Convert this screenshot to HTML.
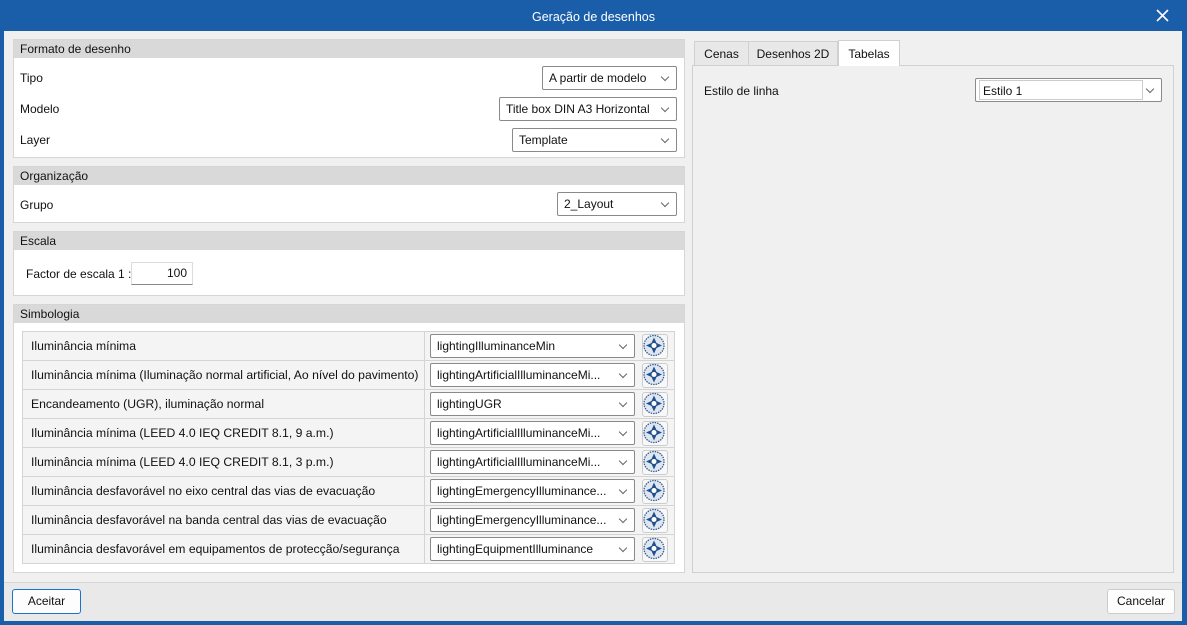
<!DOCTYPE html><html><head><style>
*{box-sizing:border-box;margin:0;padding:0}
body{width:1187px;height:625px;background:#1a5ea9;font-family:"Liberation Sans",sans-serif;font-size:12px;color:#111;position:relative;overflow:hidden}
.a{position:absolute}
.title{left:0;top:0;width:1187px;height:31px;color:#fff;text-align:center;line-height:34px;font-size:12.5px}
.x{right:17px;top:8px;width:15px;height:15px}
.main{left:4px;top:31px;width:1178px;height:590px;background:#f0f0f0}
.foot{left:4px;top:582px;width:1178px;height:39px;background:#e9e9e9;border-top:1px solid #d6d6d6}
.sec{border:1px solid #d6d6d6;background:#fff}
.sh{background:#d9d9d9;height:18px;line-height:18px;padding-left:6px}
.lbl{position:absolute;left:6px}
.sel{position:absolute;border:1px solid #8a8a8a;border-radius:2px;background:#fff;height:24px;line-height:22px;padding-left:6px;white-space:nowrap;overflow:hidden}
.sel:after{content:"";position:absolute;right:8px;top:7px;width:5px;height:5px;border-right:1px solid #666;border-bottom:1px solid #666;transform:rotate(45deg)}
.row{position:absolute;left:22px;width:653px;height:30px;border:1px solid #d4d4d4;background:#f4f4f4}
.row .t{position:absolute;left:8px;top:0;line-height:28px;font-size:12.2px}
.row .c{position:absolute;left:401px;top:-1px;width:1px;height:30px;background:#d4d4d4}
.row .sel{left:407px;top:2px;width:205px;padding-right:20px}
.btn{position:absolute;left:619px;top:2px;width:26px;height:25px;border:1px solid #ccc;border-radius:3px;background:#f8f8f8}
</style></head><body>
<div class="a title">Geração de desenhos</div>
<svg class="a x" viewBox="0 0 15 15"><path d="M2 2L13 13M13 2L2 13" stroke="#fff" stroke-width="1.6"/></svg>
<div class="a main"></div>

<div class="a sec" style="left:13px;top:39px;width:672px;height:119px"><div class="sh">Formato de desenho</div>
<span class="lbl" style="top:31px">Tipo</span><span class="lbl" style="top:62px">Modelo</span><span class="lbl" style="top:93px">Layer</span>
<div class="sel" style="left:528px;top:26px;width:135px">A partir de modelo</div>
<div class="sel" style="left:485px;top:57px;width:178px">Title box DIN A3 Horizontal</div>
<div class="sel" style="left:498px;top:88px;width:165px">Template</div></div>

<div class="a sec" style="left:13px;top:166px;width:672px;height:57px"><div class="sh">Organização</div>
<span class="lbl" style="top:31px">Grupo</span>
<div class="sel" style="left:543px;top:25px;width:120px">2_Layout</div></div>

<div class="a sec" style="left:13px;top:231px;width:672px;height:65px"><div class="sh">Escala</div>
<span class="lbl" style="left:12px;top:35px">Factor de escala 1 :</span>
<div class="a" style="left:117px;top:30px;width:62px;height:23px;border:1px solid #ddd;border-bottom:1px solid #888;text-align:right;padding-right:5px;line-height:21px">100</div></div>

<div class="a sec" style="left:13px;top:304px;width:672px;height:269px"><div class="sh">Simbologia</div></div>

<div class="row" style="top:331px"><span class="t">Iluminância mínima</span><div class="c"></div><div class="sel">lightingIlluminanceMin</div><div class="btn"></div></div>
<div class="row" style="top:360px"><span class="t">Iluminância mínima (Iluminação normal artificial, Ao nível do pavimento)</span><div class="c"></div><div class="sel">lightingArtificialIlluminanceMi...</div><div class="btn"></div></div>
<div class="row" style="top:389px"><span class="t">Encandeamento (UGR), iluminação normal</span><div class="c"></div><div class="sel">lightingUGR</div><div class="btn"></div></div>
<div class="row" style="top:418px"><span class="t">Iluminância mínima (LEED 4.0 IEQ CREDIT 8.1, 9 a.m.)</span><div class="c"></div><div class="sel">lightingArtificialIlluminanceMi...</div><div class="btn"></div></div>
<div class="row" style="top:447px"><span class="t">Iluminância mínima (LEED 4.0 IEQ CREDIT 8.1, 3 p.m.)</span><div class="c"></div><div class="sel">lightingArtificialIlluminanceMi...</div><div class="btn"></div></div>
<div class="row" style="top:476px"><span class="t">Iluminância desfavorável no eixo central das vias de evacuação</span><div class="c"></div><div class="sel">lightingEmergencyIlluminance...</div><div class="btn"></div></div>
<div class="row" style="top:505px"><span class="t">Iluminância desfavorável na banda central das vias de evacuação</span><div class="c"></div><div class="sel">lightingEmergencyIlluminance...</div><div class="btn"></div></div>
<div class="row" style="top:534px"><span class="t">Iluminância desfavorável em equipamentos de protecção/segurança</span><div class="c"></div><div class="sel">lightingEquipmentIlluminance</div><div class="btn"></div></div>

<svg class="a" style="left:0;top:0" width="1187" height="625">
<defs><g id="ic"><circle r="10" fill="#dfe6ef" stroke="#2f5d96" stroke-width="1.3" stroke-dasharray="1.5 1"/><path d="M0-8L2.5-2.5 8 0 2.5 2.5 0 8-2.5 2.5-8 0-2.5-2.5Z" fill="#1f4f8c"/><circle r="2.5" fill="#fff"/></g></defs>
<use href="#ic" x="654" y="345.5"/><use href="#ic" x="654" y="374.5"/><use href="#ic" x="654" y="403.5"/><use href="#ic" x="654" y="432.5"/><use href="#ic" x="654" y="461.5"/><use href="#ic" x="654" y="490.5"/><use href="#ic" x="654" y="519.5"/><use href="#ic" x="654" y="548.5"/>
</svg>

<div class="a" style="left:692px;top:65px;width:482px;height:508px;border:1px solid #d0d0d0;background:#f0f0f0"></div>
<div class="a" style="left:694px;top:41px;width:55px;height:25px;border:1px solid #d0d0d0;background:#e8e8e8;text-align:center;line-height:24px">Cenas</div>
<div class="a" style="left:748px;top:41px;width:90px;height:25px;border:1px solid #d0d0d0;background:#e8e8e8;text-align:center;line-height:24px">Desenhos 2D</div>
<div class="a" style="left:838px;top:40px;width:62px;height:26px;border:1px solid #d0d0d0;border-bottom:none;background:#fff;text-align:center;line-height:26px">Tabelas</div>
<span class="a" style="left:704px;top:84px">Estilo de linha</span>
<div class="sel" style="left:975px;top:78px;width:187px;height:24px;padding-left:3px;line-height:20px"><div style="border:1px solid #ccc;width:164px;height:20px;margin-top:1px;padding-left:3px">Estilo 1</div></div>

<div class="a foot"></div>
<div class="a" style="left:12px;top:589px;width:69px;height:25px;border:1px solid #1a73d0;border-radius:3px;background:#fdfdfd;text-align:center;line-height:23px">Aceitar</div>
<div class="a" style="left:1107px;top:589px;width:68px;height:25px;border:1px solid #ccc;border-radius:3px;background:#fdfdfd;text-align:center;line-height:23px">Cancelar</div>
</body></html>
